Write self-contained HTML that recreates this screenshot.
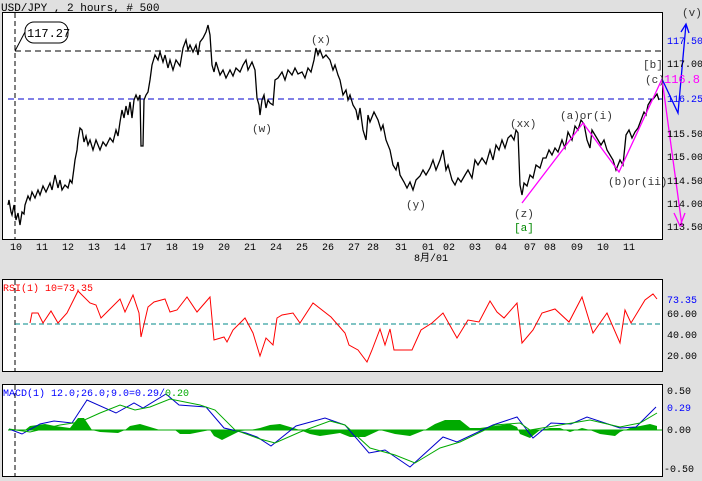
<html><head><style>body{margin:0;background:#e0e0e0;width:702px;height:481px;overflow:hidden}svg{display:block;font-family:"Liberation Mono",monospace}</style></head><body>
<svg width="702" height="481" xmlns="http://www.w3.org/2000/svg">
<rect width="702" height="481" fill="#e0e0e0"/>
<text x="1" y="11" font-size="11" fill="#000">USD/JPY , 2 hours, # 500</text>
<rect x="2.5" y="12.5" width="660" height="227" fill="#fff" stroke="#000"/>
<line x1="15" y1="13" x2="15" y2="239" stroke="#000" stroke-dasharray="5,3"/>
<line x1="15" y1="51" x2="662" y2="51" stroke="#000" stroke-dasharray="6,4"/>
<line x1="8" y1="99" x2="662" y2="99" stroke="#00c" stroke-dasharray="6,4"/>
<line x1="15" y1="51" x2="25" y2="32" stroke="#000"/>
<rect x="25" y="22" width="43" height="21" rx="9" fill="#fff" stroke="#000"/>
<text x="27" y="37" font-size="12">117.27</text>
<path fill="none" stroke="#000" stroke-width="1.3" d="M8 205 L9 200 11 212 12 215 14 205 16 220 18 213 20 225 22 212 24 214 25 205 28 196 30 200 32 192 35 198 38 190 40 195 43 186 46 192 50 183 52 190 55 175 58 188 60 180 62 190 65 185 68 188 70 180 72 183 74 168 75 160 77 150 78 140 80 128 82 130 84 142 86 136 88 145 90 140 93 150 96 140 100 150 103 142 106 146 110 138 113 142 116 130 118 136 120 122 122 110 124 118 126 106 128 115 130 102 132 118 134 100 136 95 138 100 140 95 141 146 143 146 144 100 146 95 148 92 150 80 152 65 155 55 158 60 160 52 163 62 165 55 168 68 170 60 173 70 176 60 180 66 183 48 186 40 188 50 190 45 193 52 196 45 198 55 200 42 203 38 206 32 208 25 210 35 212 65 214 72 216 62 220 75 223 70 226 78 230 70 233 76 236 68 240 72 243 65 246 60 248 70 252 62 255 70 257 98 259 105 260 115 262 100 264 95 266 108 268 100 270 103 273 105 275 80 278 78 282 72 285 80 288 70 292 75 295 68 298 74 302 72 305 78 308 68 311 72 314 60 316 48 318 55 320 50 323 58 326 55 330 60 333 70 335 65 338 75 340 80 343 95 346 90 348 100 350 95 353 105 356 110 358 120 360 108 363 130 366 140 368 115 370 122 374 112 378 120 381 130 383 125 386 140 390 150 393 165 396 170 398 162 400 175 404 182 407 188 410 182 413 190 416 180 420 176 423 170 426 175 430 168 433 160 436 170 440 160 443 150 446 170 448 165 452 180 455 185 458 178 461 182 465 175 468 170 472 178 475 160 478 165 482 158 486 164 490 150 493 160 496 145 499 150 502 140 505 148 508 138 511 135 514 140 516 130 518 133 520 185 522 195 524 183 527 186 530 175 533 178 536 165 540 168 543 158 546 158 549 150 552 155 555 148 558 152 562 140 565 148 568 132 572 140 575 126 578 130 581 120 584 124 587 140 590 148 592 130 595 135 598 140 601 145 604 140 607 150 610 155 613 160 616 170 620 160 623 165 626 135 629 130 632 138 635 132 638 128 641 120 644 112 646 115 648 105 651 100 654 98 657 94 659 100"/>
<path fill="none" stroke="#f0f" stroke-width="1.3" d="M522 203 L583 123 L619 172 L662 79 L682 226"/>
<path fill="none" stroke="#f0f" stroke-width="1.3" d="M674 213 L680 226 L685 213"/>
<path fill="none" stroke="#00f" stroke-width="1.3" d="M662 79 L678 113 L686 24 M681 32 L686 24 L689 33"/>
<g font-size="11" fill="#333">
<text x="311" y="43">(x)</text><text x="252" y="132">(w)</text><text x="406" y="208">(y)</text>
<text x="510" y="127">(xx)</text><text x="514" y="217">(z)</text><text x="514" y="231" fill="#080">[a]</text>
<text x="560" y="119">(a)or(i)</text><text x="608" y="185">(b)or(ii)</text>
<text x="643" y="68">[b]</text><text x="645" y="83">(c)</text><text x="682" y="16">(v)</text></g>
<g font-size="10"><text x="667" y="44" fill="#00f">117.50</text><text x="667" y="67">117.00</text><text x="664" y="83" fill="#f0f" font-size="12">116.8</text><text x="667" y="102" fill="#00f">116.25</text><text x="667" y="137">115.50</text><text x="667" y="160">115.00</text><text x="667" y="184">114.50</text><text x="667" y="207">114.00</text><text x="667" y="230">113.50</text>
<g>
<text x="10" y="250">10</text><text x="36" y="250">11</text><text x="62" y="250">12</text><text x="88" y="250">13</text><text x="114" y="250">14</text><text x="140" y="250">17</text><text x="166" y="250">18</text><text x="192" y="250">19</text><text x="218" y="250">20</text><text x="244" y="250">21</text><text x="270" y="250">24</text><text x="296" y="250">25</text><text x="322" y="250">26</text><text x="348" y="250">27</text><text x="367" y="250">28</text><text x="395" y="250">31</text><text x="422" y="250">01</text><text x="443" y="250">02</text><text x="469" y="250">03</text><text x="495" y="250">04</text><text x="524" y="250">07</text><text x="544" y="250">08</text><text x="571" y="250">09</text><text x="597" y="250">10</text><text x="623" y="250">11</text>
<text x="414" y="261" font-family="Liberation Mono,'Noto Sans CJK SC',monospace">8月/01</text></g></g>
<rect x="2.5" y="279.5" width="660" height="92" fill="#fff" stroke="#000"/>
<line x1="15" y1="280" x2="15" y2="372" stroke="#000" stroke-dasharray="5,3"/>
<line x1="15" y1="324" x2="662" y2="324" stroke="#088" stroke-dasharray="5,3"/>
<text x="3" y="291" font-size="10" fill="#f00">RSI(1) 10=73.35</text>
<polyline fill="none" stroke="#f00" points="30,323 32,313 38,313 43,323 51,311 58,323 67,313 78,291 90,303 96,305 101,318 107,312 120,299 125,312 133,295 139,313 141,337 148,307 154,302 165,299 170,312 177,310 187,297 197,312 210,297 214,340 224,337 227,342 233,330 245,318 253,333 260,356 266,338 273,345 277,318 282,315 293,313 300,323 313,303 331,317 345,333 349,345 358,350 367,362 372,350 380,329 385,345 390,329 394,350 412,350 421,330 432,323 443,313 457,338 468,320 479,322 490,301 497,312 504,318 517,303 522,343 533,330 542,313 555,309 569,322 582,297 593,333 607,313 620,343 625,310 631,323 645,300 653,294 657,299"/>
<g font-size="10"><text x="667" y="303" fill="#00f">73.35</text><text x="667" y="317">60.00</text><text x="667" y="338">40.00</text><text x="667" y="359">20.00</text></g>
<rect x="2.5" y="384.5" width="660" height="92" fill="#fff" stroke="#000"/>
<line x1="15" y1="385" x2="15" y2="476" stroke="#000" stroke-dasharray="5,3"/>
<path fill="#0a0" d="M25 430 L30 426 45 424 55 426 70 428 78 418 84 418 92 430 100 432 118 433 125 430 130 426 140 424 150 427 160 430 175 430 180 434 190 434 210 430 214 436 222 440 230 436 240 431 250 430 260 428 270 425 280 424 300 430 310 434 320 436 340 433 350 437 365 437 380 430 395 434 410 436 420 432 425 430 435 424 445 420 460 420 470 428 480 428 495 426 510 424 517 427 520 434 530 438 540 430 550 428 560 428 570 432 582 428 590 430 600 434 615 436 620 432 630 428 640 426 650 424 657 426 L657 430 Z"/>
<line x1="8" y1="430" x2="662" y2="430" stroke="#0a0"/>
<polyline fill="none" stroke="#00c" points="9,429 22,434 40,424 54,421 72,423 87,400 116,413 134,403 143,408 166,394 179,405 206,407 224,428 246,433 257,437 271,446 296,426 325,418 345,425 369,453 385,450 410,467 443,437 457,442 493,425 517,417 533,438 551,423 571,424 587,417 620,428 636,427 656,407"/>
<polyline fill="none" stroke="#0a0" points="9,429 30,432 60,425 80,422 100,413 120,405 135,410 150,407 170,399 200,405 215,410 235,430 260,439 275,443 300,432 330,421 345,425 370,448 395,455 415,463 440,448 460,442 495,425 520,423 530,430 560,425 590,420 620,427 640,423 657,413"/>
<text x="3" y="396" font-size="10" fill="#00f">MACD(1) 12.0;26.0;9.0=0.29/<tspan fill="#0a0">0.20</tspan></text>
<g font-size="10"><text x="667" y="394">0.50</text><text x="667" y="411" fill="#00f">0.29</text><text x="667" y="433">0.00</text><text x="664" y="472">-0.50</text></g>
</svg></body></html>
